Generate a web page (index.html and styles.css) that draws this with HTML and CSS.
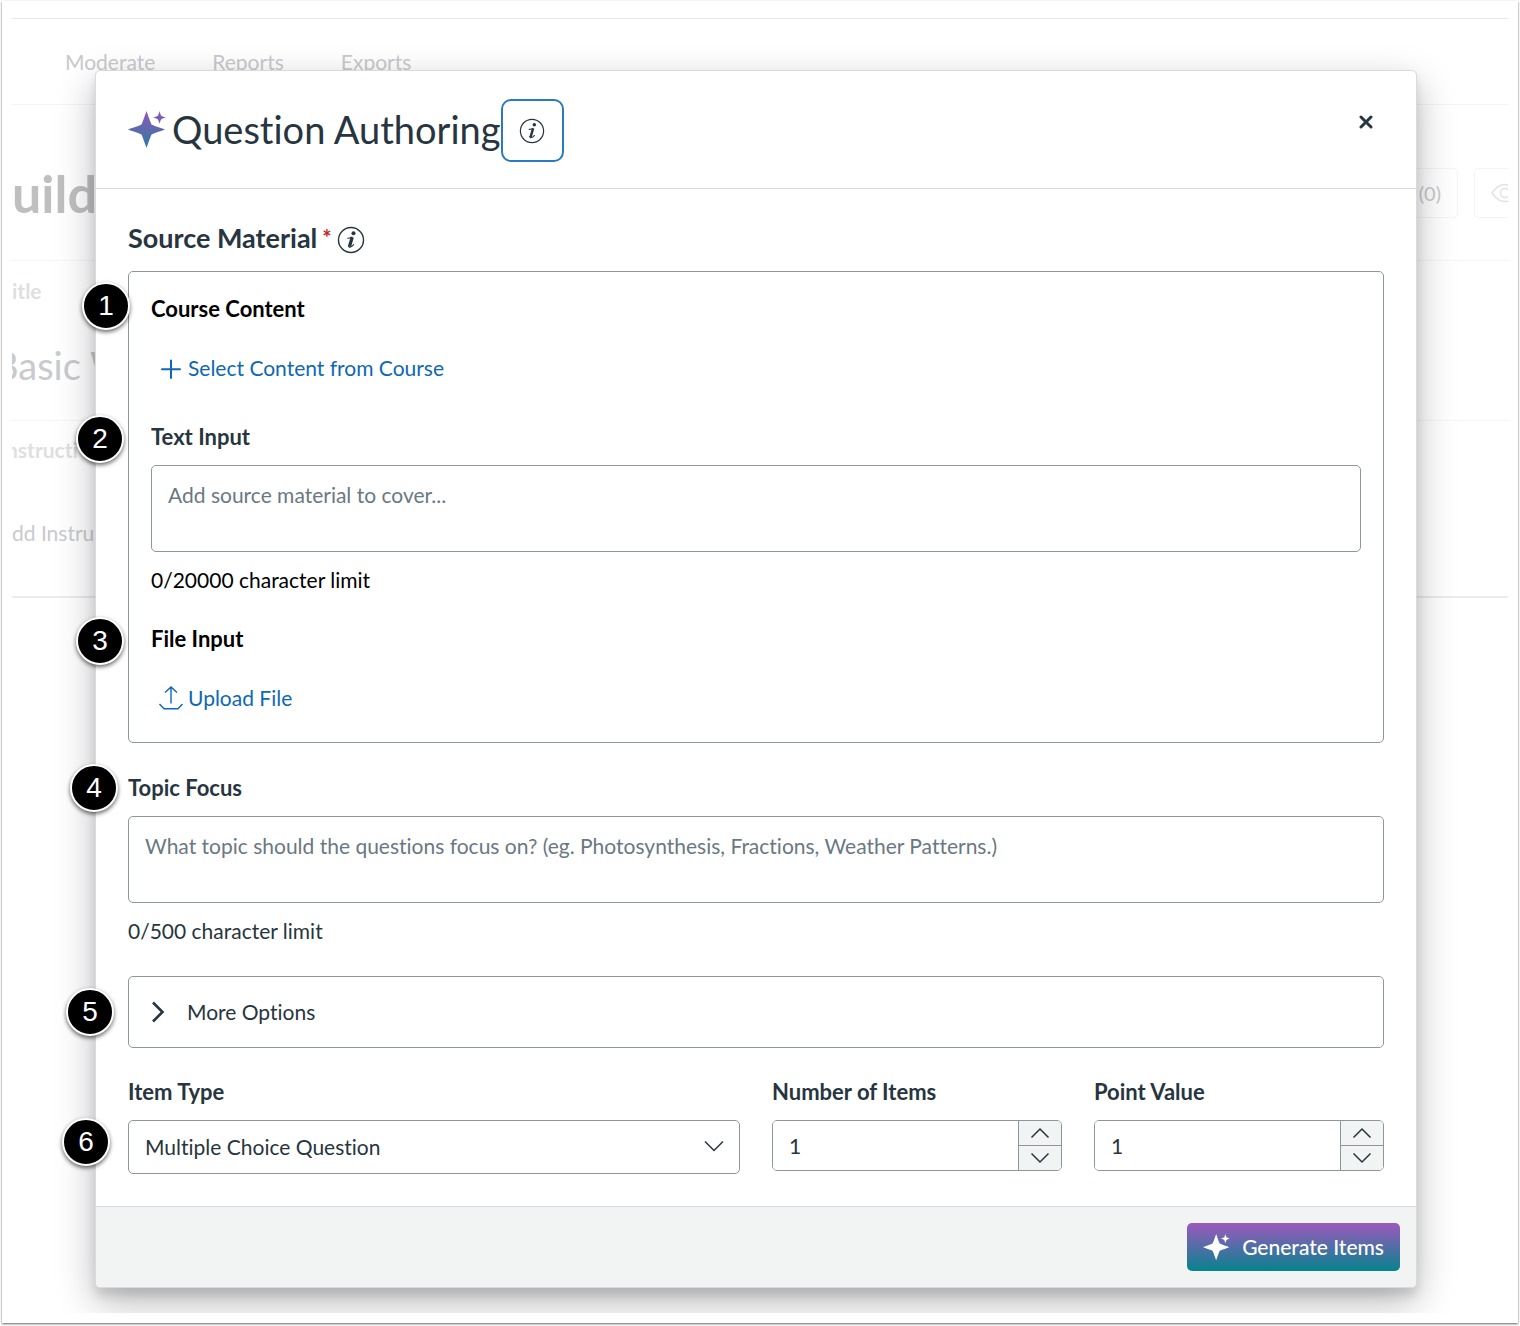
FILE: index.html
```html
<!DOCTYPE html>
<html lang="en">
<head>
    <meta charset="UTF-8">
    <meta name="viewport" content="width=device-width, initial-scale=1.0">
    <title>Question Authoring</title>
    <link rel="stylesheet" href="styles.css">
</head>
<body>
    <div class="frame">
        <div class="screen">

            <!-- page behind the dialog -->
            <div class="page">
                <nav class="page-nav">
                    <a href="#">Moderate</a>
                    <a href="#">Reports</a>
                    <a href="#">Exports</a>
                </nav>
                <div class="page-header">
                    <h1>uild</h1>
                    <div class="page-actions">
                        <button type="button" class="page-button">(0)</button>
                        <button type="button" class="page-button preview" aria-label="Preview">
                            <svg width="28" height="20" viewBox="0 0 28 20" fill="none" stroke="currentColor" stroke-width="1.5">
                                <path d="M1 10C5 4 9 1.500 14 1.500S23 4 27 10C23 16 19 18.500 14 18.500S5 16 1 10Z"/>
                                <circle cx="14" cy="10" r="4.500"/>
                            </svg>
                        </button>
                    </div>
                </div>
                <div class="page-title">
                    <p class="page-label">itle</p>
                    <p class="page-value">Basic W</p>
                </div>
                <div class="page-instructions">
                    <p class="page-label clipped">nstructi</p>
                    <p class="page-text">dd Instru</p>
                </div>
            </div>

            <!-- dialog -->
            <div class="overlay">
                <div class="modal" role="dialog" aria-labelledby="modal-title">
                    <div class="modal-header">
                        <svg class="sparkle" width="38" height="40" viewBox="0 0 38 40">
                            <defs>
                                <linearGradient id="ai" x1="0" y1="0" x2="0" y2="38" gradientUnits="userSpaceOnUse">
                                    <stop offset="0" stop-color="#8f58b8"/>
                                    <stop offset="1" stop-color="#2a7ba0"/>
                                </linearGradient>
                            </defs>
                            <path fill="url(#ai)" d="M18.500 0C20 4 21.500 9 23.500 13.500C28 15.500 33 17 37 18.500C33 20 28 21.500 23.500 23.500C21.500 28 20 33 18.500 37C17 33 15.500 28 13.500 23.500C9 21.500 4 20 0 18.500C4 17 9 15.500 13.500 13.500C15.500 9 17 4 18.500 0ZM31.500 0C32 2 32.500 3.500 33.300 4.700C34.500 5.500 36 6 38 6.500C36 7 34.500 7.500 33.300 8.300C32.500 9.500 32 11 31.500 13C31 11 30.500 9.500 29.700 8.300C28.500 7.500 27 7 25 6.500C27 6 28.500 5.500 29.700 4.700C30.500 3.500 31 2 31.500 0Z"/>
                        </svg>
                        <h2 id="modal-title">Question Authoring</h2>
                        <button type="button" class="info-button" aria-label="About question authoring">
                            <svg width="26" height="26" viewBox="0 0 28 28" fill="none" stroke="currentColor">
                                <circle cx="14" cy="14" r="12.500" stroke-width="1.300"/>
                                <circle cx="16.500" cy="7.300" r="1.900" fill="currentColor" stroke="none"/>
                                <path d="M10.500 12.300C12 12.300 13.500 11.800 15.500 11" stroke-width="1.200"/>
                                <path d="M15.200 11.200L12.500 20.500" stroke-width="2.600"/>
                                <path d="M11.500 19.500C11.500 22.500 15.500 20.800 16.800 18.300" stroke-width="1.200"/>
                            </svg>
                        </button>
                        <button type="button" class="close-button" aria-label="Close">
                            <svg width="14" height="14" viewBox="0 0 14 14" stroke="currentColor" stroke-width="3" stroke-linecap="round">
                                <path d="M2 2L12 12M12 2L2 12"/>
                            </svg>
                        </button>
                    </div>

                    <form class="modal-body">
                        <h3 class="source-title">
                            Source Material <span class="required">*</span>
                            <svg width="28" height="28" viewBox="0 0 28 28" fill="none" stroke="currentColor">
                                <circle cx="14" cy="14" r="12.500" stroke-width="1.400"/>
                                <circle cx="16.500" cy="7.300" r="2" fill="currentColor" stroke="none"/>
                                <path d="M10.500 12.300C12 12.300 13.500 11.800 15.500 11" stroke-width="1.200"/>
                                <path d="M15.200 11.200L12.500 20.500" stroke-width="3.200"/>
                                <path d="M11.500 19.500C11.500 22.500 15.500 20.800 16.800 18.300" stroke-width="1.200"/>
                            </svg>
                        </h3>
                        <div class="source-box">
                            <div class="field">
                                <span class="badge badge-1">1</span>
                                <h4 class="label dark">Course Content</h4>
                                <button type="button" class="link-button">
                                    <svg width="24" height="24" viewBox="0 0 24 24" fill="none" stroke="currentColor" stroke-width="2">
                                        <path d="M12 4.500V22M3 13.300H21" stroke-linecap="round"/>
                                    </svg>
                                    Select Content from Course
                                </button>
                            </div>
                            <div class="field">
                                <span class="badge badge-2">2</span>
                                <label class="label" for="source-text">Text Input</label>
                                <textarea id="source-text" placeholder="Add source material to cover..."></textarea>
                                <p class="hint dark">0/20000 character limit</p>
                            </div>
                            <div class="field">
                                <span class="badge badge-2">3</span>
                                <h4 class="label dark">File Input</h4>
                                <button type="button" class="link-button">
                                    <svg width="24" height="24" viewBox="0 0 24 24" fill="none" stroke="currentColor" stroke-width="1.400">
                                        <path d="M12 17.500V1M6 6.500L12 1L18 6.500"/>
                                        <path d="M0.500 18L5 22.800H19L23.500 18"/>
                                    </svg>
                                    Upload File
                                </button>
                            </div>
                        </div>

                        <div class="field">
                            <span class="badge badge-4">4</span>
                            <label class="label" for="topic">Topic Focus</label>
                            <textarea id="topic" placeholder="What topic should the questions focus on? (eg. Photosynthesis, Fractions, Weather Patterns.)"></textarea>
                            <p class="hint">0/500 character limit</p>
                        </div>

                        <div class="field">
                            <span class="badge badge-5">5</span>
                            <button type="button" class="more-options" aria-expanded="false">
                                <svg width="14" height="22" viewBox="0 0 14 22" fill="none" stroke="currentColor" stroke-width="2.600">
                                    <path d="M2 1.500L11.500 11L2 20.500"/>
                                </svg>
                                More Options
                            </button>
                        </div>

                        <div class="options-row">
                            <div class="field item-type">
                                <span class="badge badge-6">6</span>
                                <label class="label" for="item-type">Item Type</label>
                                <div class="select-wrap">
                                    <select id="item-type">
                                        <option>Multiple Choice Question</option>
                                    </select>
                                    <svg width="20" height="12" viewBox="0 0 20 12" fill="none" stroke="currentColor" stroke-width="1.500">
                                        <path d="M1 1.500L10 10.500L19 1.500"/>
                                    </svg>
                                </div>
                            </div>
                            <div class="field">
                                <label class="label" for="item-count">Number of Items</label>
                                <div class="number">
                                    <input type="number" id="item-count" value="1" min="1">
                                    <div class="arrows">
                                        <button type="button" aria-label="More items">
                                            <svg width="20" height="12" viewBox="0 0 20 12" fill="none" stroke="currentColor" stroke-width="1.500"><path d="M1.500 10.500L10 2L18.500 10.500"/></svg>
                                        </button>
                                        <button type="button" aria-label="Fewer items">
                                            <svg width="20" height="12" viewBox="0 0 20 12" fill="none" stroke="currentColor" stroke-width="1.500"><path d="M1.500 1.500L10 10L18.500 1.500"/></svg>
                                        </button>
                                    </div>
                                </div>
                            </div>
                            <div class="field">
                                <label class="label" for="points">Point Value</label>
                                <div class="number">
                                    <input type="number" id="points" value="1" min="1">
                                    <div class="arrows">
                                        <button type="button" aria-label="More points">
                                            <svg width="20" height="12" viewBox="0 0 20 12" fill="none" stroke="currentColor" stroke-width="1.500"><path d="M1.500 10.500L10 2L18.500 10.500"/></svg>
                                        </button>
                                        <button type="button" aria-label="Fewer points">
                                            <svg width="20" height="12" viewBox="0 0 20 12" fill="none" stroke="currentColor" stroke-width="1.500"><path d="M1.500 1.500L10 10L18.500 1.500"/></svg>
                                        </button>
                                    </div>
                                </div>
                            </div>
                        </div>
                    </form>

                    <div class="modal-footer">
                        <button type="button" class="generate-button">
                            <svg width="27" height="27" viewBox="0 0 38 38" fill="currentColor">
                                <path d="M18.500 0C20 4 21.500 9 23.500 13.500C28 15.500 33 17 37 18.500C33 20 28 21.500 23.500 23.500C21.500 28 20 33 18.500 37C17 33 15.500 28 13.500 23.500C9 21.500 4 20 0 18.500C4 17 9 15.500 13.500 13.500C15.500 9 17 4 18.500 0ZM31.500 0C32 2 32.500 3.500 33.300 4.700C34.500 5.500 36 6 38 6.500C36 7 34.500 7.500 33.300 8.300C32.500 9.500 32 11 31.500 13C31 11 30.500 9.500 29.700 8.300C28.500 7.500 27 7 25 6.500C27 6 28.500 5.500 29.700 4.700C30.500 3.500 31 2 31.500 0Z"/>
                            </svg>
                            Generate Items
                        </button>
                    </div>
                </div>
            </div>

        </div>
    </div>
</body>
</html>
```
FILE: styles.css
```css
* {
    box-sizing: border-box;
}

body {
    margin: 0;
    padding: 1px 2px 3px;
    background-color: white;
    color: #273540;
    font-family: Lato, "Open Sans", sans-serif;
    font-size: 21px;
    font-variant-ligatures: none;
    line-height: 28px;
}

h1, h2, h3, h4, p {
    margin: 0;
}

button, input, select, textarea {
    margin: 0;
    font: inherit;
    font-variant-ligatures: none;
    color: inherit;
}

button {
    padding: 0;
    border: none;
    background: none;
}

svg {
    flex: none;
}

.frame {
    padding: 11px 10px 10px;
    box-shadow: 0 1px 2px rgba(0, 0, 0, 0.6);
}

/* page and dialog share one grid cell */
.screen {
    display: grid;
    overflow: hidden;
}

.page, .overlay {
    grid-area: 1 / 1;
    min-width: 0;
}

/* page behind */
.page {
    padding-top: 6px;
    color: #c8cacd;
}

.page-nav {
    display: flex;
    align-items: center;
    gap: 57px;
    height: 87px;
    padding-left: 53px;
    border-top: 1px solid #e6e6e6;
    border-bottom: 1px solid #f4f4f4;
}

.page-nav a {
    color: inherit;
    text-decoration: none;
}

.page-header {
    display: flex;
    align-items: center;
    justify-content: space-between;
    height: 156px;
    padding-top: 20px;
    border-bottom: 1px solid #f4f4f4;
}

.page-header h1 {
    color: #bfbfbf;
    font-size: 52px;
    line-height: 60px;
}

.page-actions {
    display: flex;
    gap: 16px;
}

.page-button {
    width: 100px;
    height: 50px;
    padding-right: 16px;
    border: 1px solid #f4f4f4;
    border-radius: 5px;
    font-size: 20px;
    text-align: right;
}

.page-button.preview {
    width: 34px;
    padding: 0 0 0 16px;
    border-right: none;
    border-radius: 5px 0 0 5px;
    color: #e2e2e2;
    text-align: left;
}

.preview svg {
    display: block;
}

.page-title {
    padding: 16px 0 31px;
    border-bottom: 1px solid #f4f4f4;
}

.page-label {
    color: #dddfe1;
    font-weight: bold;
}

.page-label.clipped {
    margin-left: -6px;
}

.page-value {
    margin: 36px 0 0 -18px;
    font-size: 38px;
    line-height: 48px;
}

.page-instructions {
    padding: 15px 0 49px;
    border-bottom: 2px solid #ececec;
}

.page-text {
    margin-top: 55px;
}

/* dialog */
.overlay {
    position: relative;
    padding: 58px 91px 25px 83px;
}

.modal {
    border: 1px solid #d7dade;
    border-radius: 5px;
    background-color: white;
    box-shadow: 0 8px 10px rgba(0, 0, 0, 0.1), 0 14px 38px rgba(0, 0, 0, 0.28);
}

.modal-header {
    display: flex;
    align-items: center;
    padding: 28px 33px 26px 32px;
    border-bottom: 1px solid #d7dade;
}

.modal-header h2 {
    margin-left: 6px;
    padding-bottom: 4px;
    font-size: 38px;
    font-weight: normal;
    line-height: 46px;
}

.info-button {
    display: flex;
    align-items: center;
    justify-content: center;
    width: 63px;
    height: 63px;
    border: 2px solid #2b7abc;
    border-radius: 10px;
}

.close-button {
    align-self: flex-start;
    display: flex;
    align-items: center;
    justify-content: center;
    width: 34px;
    height: 46px;
    margin-left: auto;
}

.modal-body {
    padding: 32px;
}

.source-title {
    display: flex;
    align-items: flex-end;
    gap: 5px;
    margin-bottom: 17px;
    font-size: 27px;
    line-height: 33px;
}

.required {
    color: #c71f23;
    font-size: 22px;
}

.source-box {
    margin-bottom: 31px;
    padding: 23px 22px 20px;
    border: 1px solid #8d959f;
    border-radius: 5px;
}

.field {
    position: relative;
}

.field + .field {
    margin-top: 31px;
}

.label {
    display: block;
    font-size: 22px;
    font-weight: bold;
}

.dark {
    color: black;
}

.link-button {
    display: flex;
    align-items: center;
    gap: 5px;
    height: 48px;
    margin-top: 21px;
    padding: 0 8px;
    color: #0e68b3;
}

textarea {
    display: block;
    width: 100%;
    height: 87px;
    margin: 14px 0;
    padding: 15px 16px;
    border: 1px solid #8d959f;
    border-radius: 5px;
    background-color: white;
    resize: none;
}

textarea::placeholder {
    color: #6a7883;
    opacity: 1;
}

.more-options {
    display: flex;
    align-items: center;
    gap: 22px;
    width: 100%;
    height: 72px;
    padding: 0 22px;
    border: 1px solid #8d959f;
    border-radius: 5px;
}

.options-row {
    display: grid;
    grid-template-columns: repeat(4, minmax(0, 1fr));
    gap: 32px;
    margin-top: 30px;
}

.options-row .field {
    margin-top: 0;
}

.item-type {
    grid-column: span 2;
}

.select-wrap {
    position: relative;
    margin-top: 14px;
}

.select-wrap svg {
    position: absolute;
    top: 20px;
    right: 16px;
    pointer-events: none;
}

select {
    display: block;
    width: 100%;
    height: 54px;
    padding: 0 16px;
    border: 1px solid #8d959f;
    border-radius: 5px;
    background-color: white;
    appearance: none;
}

.number {
    display: flex;
    height: 51px;
    margin-top: 14px;
    border: 1px solid #8d959f;
    border-radius: 5px;
    overflow: hidden;
}

.number input {
    flex: 1;
    min-width: 0;
    padding: 0 16px;
    border: none;
    background-color: white;
    appearance: textfield;
}

.number input::-webkit-inner-spin-button {
    display: none;
}

.arrows {
    display: flex;
    flex-direction: column;
    width: 43px;
    border-left: 1px solid #8d959f;
    background-color: #f2f4f4;
}

.arrows button {
    display: flex;
    flex: 1;
    align-items: center;
    justify-content: center;
}

.arrows button + button {
    border-top: 1px solid #8d959f;
}

.modal-footer {
    display: flex;
    justify-content: flex-end;
    padding: 16px;
    border-top: 1px solid #d7dade;
    border-radius: 0 0 5px 5px;
    background-color: #f2f4f4;
}

.generate-button {
    display: flex;
    align-items: center;
    gap: 12px;
    height: 48px;
    padding: 0 16px;
    border-radius: 5px;
    background: linear-gradient(#9e58bd, #06838e);
    color: white;
    font-weight: 500;
}

/* step numbers */
.badge {
    position: absolute;
    top: -8px;
    width: 48px;
    height: 48px;
    border: 2px solid white;
    border-radius: 50%;
    background-color: black;
    box-shadow: 0 2px 4px rgba(0, 0, 0, 0.6);
    color: white;
    font-family: "Liberation Sans", Arial, sans-serif;
    font-size: 28px;
    line-height: 44px;
    text-align: center;
}

.badge-1 {
    top: -13px;
    left: -69px;
}

.badge-2 {
    left: -75px;
}

.badge-4 {
    top: -10px;
    left: -58px;
}

.badge-5 {
    top: 12px;
    left: -62px;
}

.badge-6 {
    top: 40px;
    left: -66px;
}
```
